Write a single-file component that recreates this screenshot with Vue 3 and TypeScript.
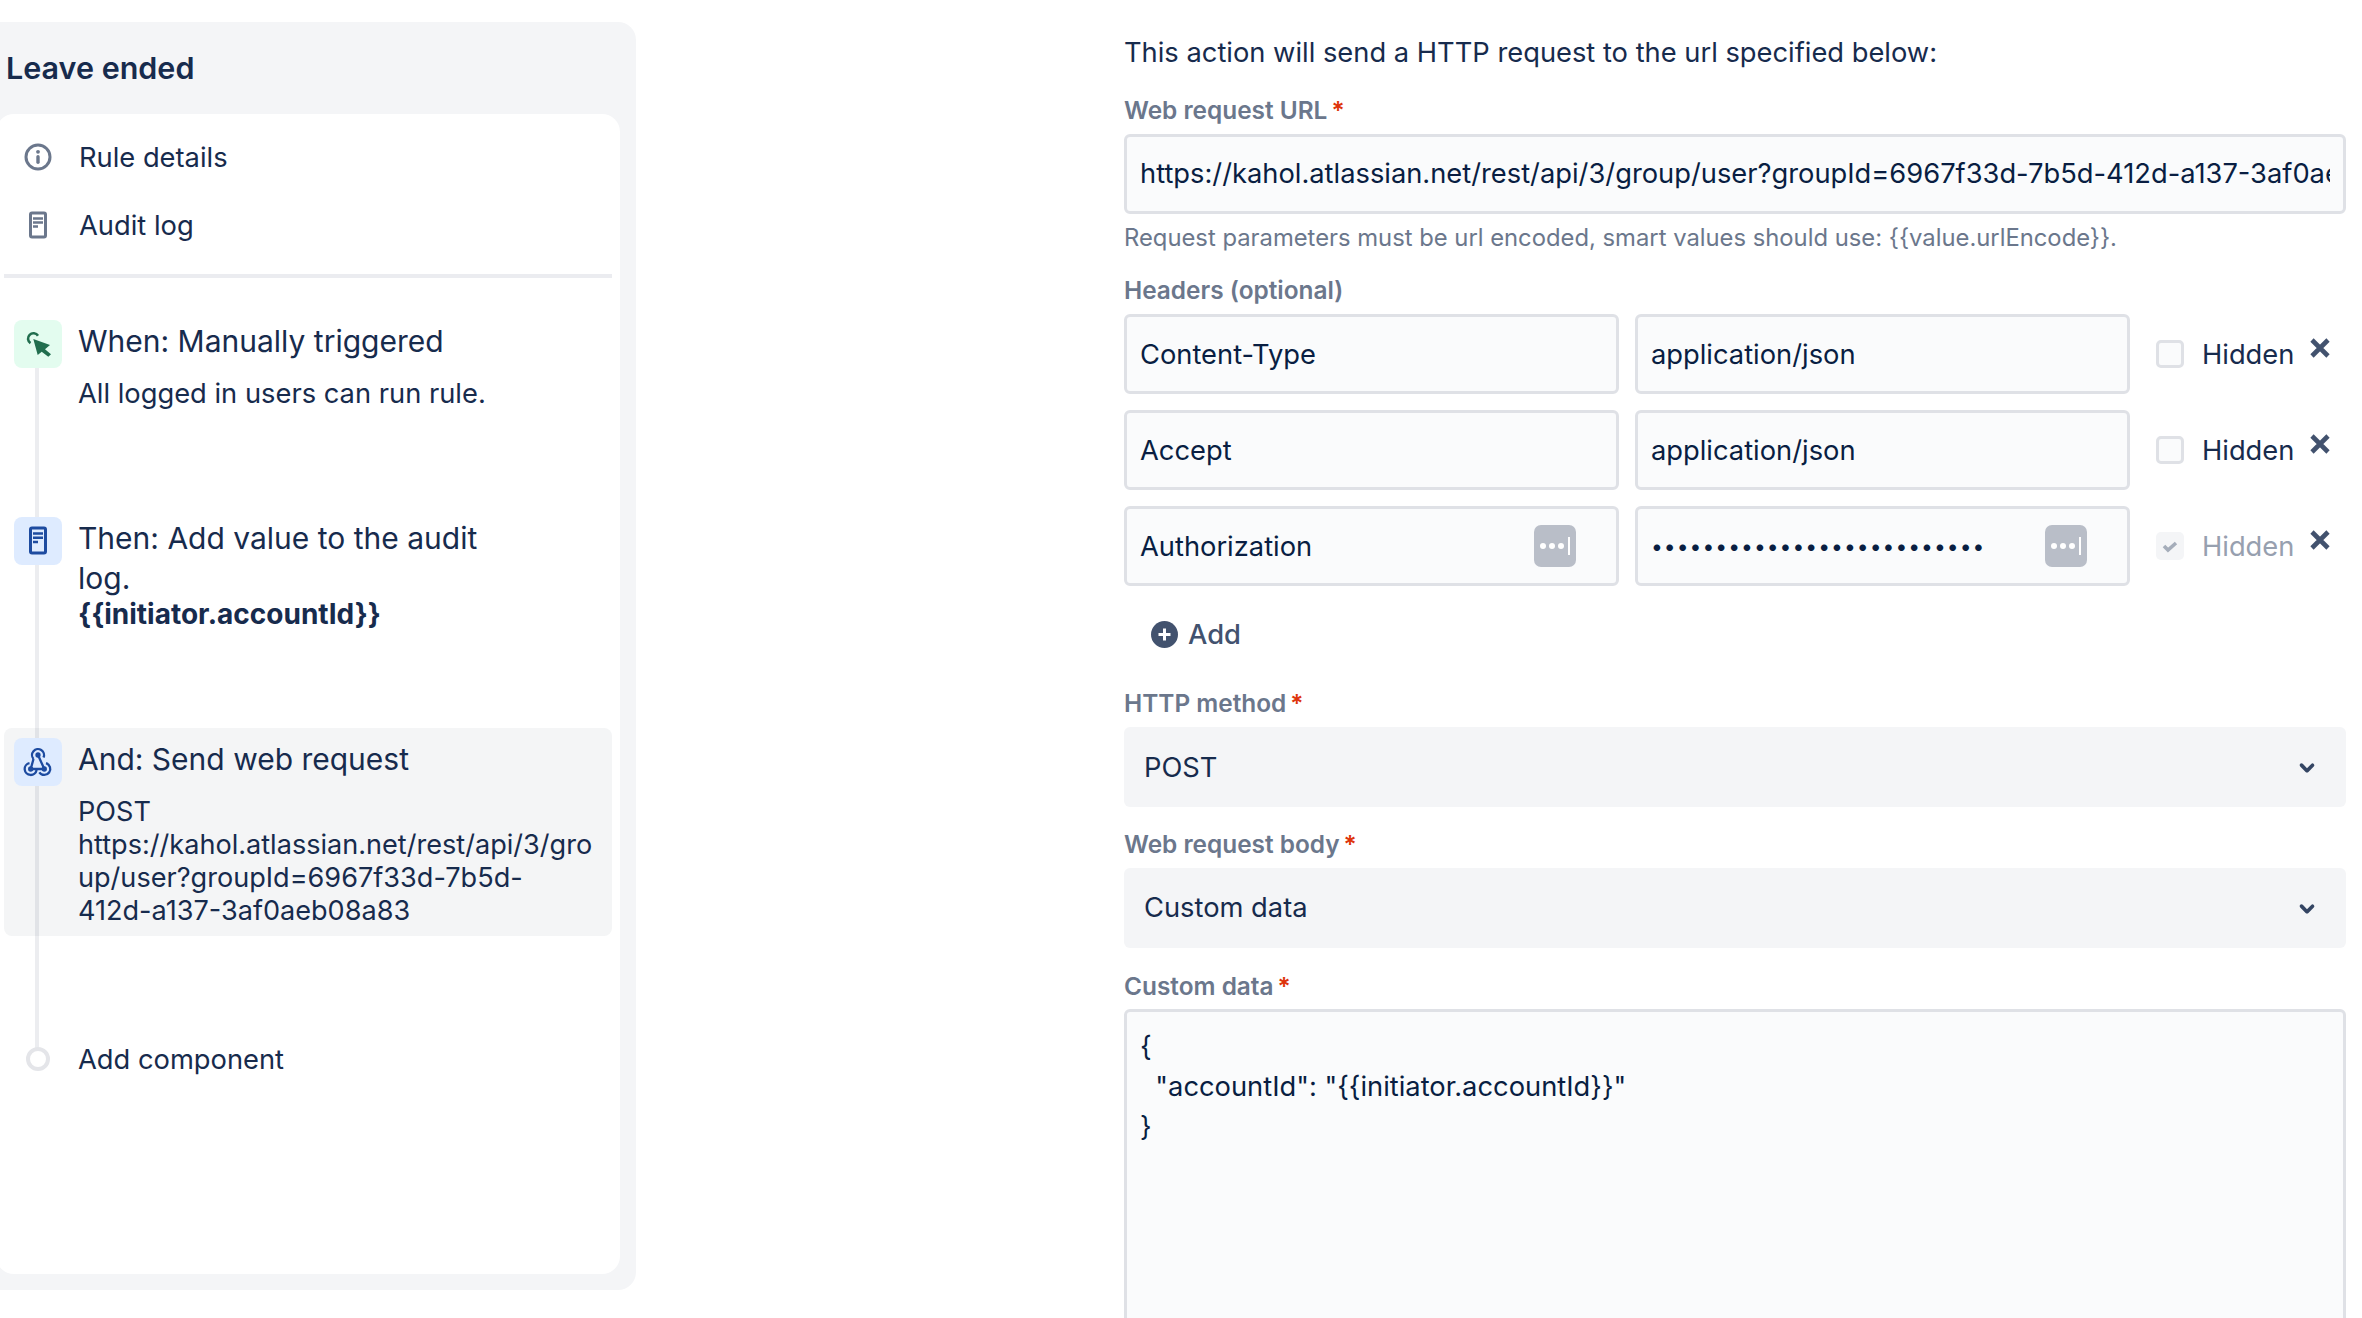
<script setup lang="ts">
const headers = [
  { key: 'Content-Type', value: 'application/json' },
  { key: 'Accept', value: 'application/json' },
]
const dots = '•'.repeat(26)
</script>

<template>
  <div class="page">
    <aside class="sidebar">
      <h1 class="title">Leave ended</h1>
      <div class="panel">
        <div class="nav-item">
          <span class="nav-icon">
            <svg width="36" height="36" viewBox="0 0 36 36"><circle cx="18" cy="18" r="12" fill="none" stroke="#6b778c" stroke-width="3"/><circle cx="18" cy="12.8" r="1.9" fill="#6b778c"/><rect x="16.3" y="16" width="3.4" height="9" rx="1.7" fill="#6b778c"/></svg>
          </span>
          Rule details
        </div>
        <div class="nav-item">
          <span class="nav-icon">
            <svg width="36" height="36" viewBox="0 0 36 36"><rect x="10.5" y="6" width="15" height="24" rx="1.5" fill="none" stroke="#6b778c" stroke-width="3"/><path d="M13 11.5h10M13 15.5h10M13 19.5h5" stroke="#6b778c" stroke-width="2.4"/></svg>
          </span>
          Audit log
        </div>
        <div class="divider"></div>

        <div class="steps">
          <div class="line"></div>
          <div class="step step-trigger">
            <span class="box box-green">
              <svg width="28" height="28" viewBox="0 0 28 28"><path d="M6.5 13.2A5.4 5.4 0 1 1 14 5.8" fill="none" stroke="#216e4e" stroke-width="2.6"/><path d="M9.3 9 26 15l-5 4.3 6 5-2.7 2.4-6.6-5-4 3.3z" fill="#216e4e"/></svg>
            </span>
            <div class="step-body">
              <div class="step-title">When: Manually triggered</div>
              <div class="step-text sub">All logged in users can run rule.</div>
            </div>
          </div>

          <div class="step step-then">
            <span class="box box-blue">
              <svg width="28" height="32" viewBox="0 0 28 32"><rect x="6.5" y="3" width="15" height="25" rx="1.5" fill="none" stroke="#1d4ba0" stroke-width="3"/><path d="M9 8.500h10M9 12.800h10M9 17h5" stroke="#1d4ba0" stroke-width="2.400"/></svg>
            </span>
            <div class="step-body">
              <div class="step-title narrow">Then: Add value to the audit log.</div>
              <div class="step-text bold">&#123;&#123;initiator.accountId&#125;&#125;</div>
            </div>
          </div>

          <div class="step step-and">
            <span class="box box-blue">
              <svg width="30" height="30" viewBox="0 0 30 30" fill="none" stroke="#1d4ba0" stroke-width="2.300"><path d="M10.500 12A6 6 0 1 1 20.500 10.500"/><path d="M15 8l6.300 14M10.500 12 7.700 22M7.700 22h13.600"/><path d="M6.500 16.100A6 6 0 1 0 13.600 23"/><path d="M23 16.200A6 6 0 1 1 16.300 25.300"/><circle cx="15" cy="8" r="1.500" fill="#1d4ba0"/><circle cx="7.700" cy="22" r="1.500" fill="#1d4ba0"/><circle cx="21.300" cy="22" r="1.500" fill="#1d4ba0"/></svg>
            </span>
            <div class="step-body">
              <div class="step-title">And: Send web request</div>
              <div class="step-text sub url-lines">POST<br />https://kahol.atlassian.net/rest/api/3/gro<br />up/user?groupId=6967f33d-7b5d-<br />412d-a137-3af0aeb08a83</div>
            </div>
          </div>

          <div class="step step-add">
            <span class="add-slot"><span class="ring"></span></span>
            <div class="add-text">Add component</div>
          </div>
        </div>
      </div>
    </aside>

    <main class="form">
      <p class="intro">This action will send a HTTP request to the url specified below:</p>

      <label class="label first">Web request URL<span class="req">*</span></label>
      <div class="input url"><span class="clip">https://kahol.atlassian.net/rest/api/3/group/user?groupId=6967f33d-7b5d-412d-a137-3af0aeb08a83</span></div>
      <p class="help">Request parameters must be url encoded, smart values should use: &#123;&#123;value.urlEncode&#125;&#125;.</p>

      <label class="label headers-label">Headers (optional)</label>
      <div class="rows">
        <div v-for="h in headers" :key="h.key" class="row">
          <div class="input key">{{ h.key }}</div>
          <div class="input val">{{ h.value }}</div>
          <span class="check"></span>
          <span class="hidden-label">Hidden</span>
          <svg class="close" width="22" height="22" viewBox="0 0 22 22"><path d="M3 3l16 16M19 3L3 19" stroke="#42526e" stroke-width="4.600"/></svg>
        </div>
        <div class="row">
          <div class="input key spaced">
            Authorization
            <span class="secret"><svg width="42" height="42" viewBox="0 0 42 42"><circle cx="9" cy="21" r="3" fill="#fff"/><circle cx="18" cy="21" r="3" fill="#fff"/><circle cx="27" cy="21" r="3" fill="#fff"/><rect x="34" y="12" width="2" height="18" fill="#fff"/></svg></span>
          </div>
          <div class="input val spaced">
            <span class="dots">{{ dots }}</span>
            <span class="secret"><svg width="42" height="42" viewBox="0 0 42 42"><circle cx="9" cy="21" r="3" fill="#fff"/><circle cx="18" cy="21" r="3" fill="#fff"/><circle cx="27" cy="21" r="3" fill="#fff"/><rect x="34" y="12" width="2" height="18" fill="#fff"/></svg></span>
          </div>
          <span class="check checked"><svg width="20" height="20" viewBox="0 0 20 20"><path d="M4 10l4 4 8-7" fill="none" stroke="#a5adba" stroke-width="3.600"/></svg></span>
          <span class="hidden-label off">Hidden</span>
          <svg class="close" width="22" height="22" viewBox="0 0 22 22"><path d="M3 3l16 16M19 3L3 19" stroke="#42526e" stroke-width="4.600"/></svg>
        </div>
      </div>

      <div class="add">
        <svg width="27" height="27" viewBox="0 0 27 27"><circle cx="13.500" cy="13.500" r="13.500" fill="#42526e"/><path d="M13.500 7.500v12M7.500 13.500h12" stroke="#fff" stroke-width="3"/></svg>
        Add
      </div>

      <label class="label method-label">HTTP method<span class="req">*</span></label>
      <div class="select">
        POST
        <svg width="44" height="44" viewBox="0 0 24 24"><path fill="#344563" d="M8.292 10.293a1.009 1.009 0 000 1.419l2.939 2.965c.218.215.5.322.779.322s.556-.107.769-.322l2.93-2.955a1.01 1.01 0 000-1.419.987.987 0 00-1.406 0l-2.298 2.317-2.307-2.327a.99.99 0 00-1.406 0z"/></svg>
      </div>

      <label class="label body-label">Web request body<span class="req">*</span></label>
      <div class="select">
        Custom data
        <svg width="44" height="44" viewBox="0 0 24 24"><path fill="#344563" d="M8.292 10.293a1.009 1.009 0 000 1.419l2.939 2.965c.218.215.5.322.779.322s.556-.107.769-.322l2.93-2.955a1.01 1.01 0 000-1.419.987.987 0 00-1.406 0l-2.298 2.317-2.307-2.327a.99.99 0 00-1.406 0z"/></svg>
      </div>

      <label class="label data-label">Custom data<span class="req">*</span></label>
      <pre class="textarea">{
  "accountId": "&#123;&#123;initiator.accountId&#125;&#125;"
}</pre>
    </main>
  </div>
</template>

<style>
html, body { margin: 0; overflow: hidden; background: #fff; }
</style>

<style scoped>
.page {
  display: flex;
  align-items: flex-start;
  height: 1318px;
  overflow: hidden;
  font-family: Inter, "Liberation Sans", sans-serif;
  font-size: 27.3px;
  color: #172b4d;
  background: #fff;
}
.sidebar {
  flex: none;
  box-sizing: border-box;
  width: 652px;
  height: 1268px;
  margin: 22px 0 0 -16px;
  padding-left: 12px;
  background: #f4f5f7;
  border-radius: 18px;
}
.title {
  height: 92px;
  margin: 0;
  padding-left: 10px;
  font-size: 30.5px;
  font-weight: 600;
  line-height: 92px;
}
.panel {
  box-sizing: border-box;
  width: 624px;
  height: 1160px;
  padding: 9px 8px 0;
  background: #fff;
  border-radius: 18px;
}
.nav-item {
  display: flex;
  align-items: center;
  gap: 23px;
  height: 68px;
  padding-left: 16px;
}
.nav-icon { display: flex; width: 36px; height: 36px; }
.divider { height: 4px; margin-top: 15px; background: #ebecf0; }
.steps { position: relative; margin-top: 42px; }
.line {
  position: absolute;
  z-index: 1;
  top: 48px;
  left: 31px;
  bottom: 24px;
  width: 4px;
  background: rgba(9, 30, 66, 0.08);
}
.step { display: flex; gap: 16px; padding-left: 10px; }
.box {
  position: relative;
  z-index: 2;
  flex: none;
  display: flex;
  align-items: center;
  justify-content: center;
  width: 48px;
  height: 48px;
  border-radius: 8px;
}
.box-green { background: #e3fcef; }
.box-blue { background: #deebff; }
.step-title { font-size: 30px; line-height: 40px; }
.step-text { line-height: 33px; }
.sub { margin-top: 16px; }
.step-trigger .step-body { padding-top: 1px; }
.step-then { margin-top: 107px; }
.step-then .step-body { padding-top: 1px; }
.narrow { width: 440px; }
.bold { font-size: 28px; font-weight: 700; }
.step-and {
  margin-top: 97px;
  padding-top: 10px;
  padding-bottom: 9px;
  background: #f4f5f6;
  border-radius: 8px;
}
.step-and .step-body { padding-top: 1px; }
.url-lines { margin-top: 16px; font-size: 27.1px; white-space: nowrap; }
.step-add { align-items: center; height: 34px; margin-top: 106px; }
.add-slot { display: flex; justify-content: center; width: 48px; position: relative; z-index: 2; }
.ring {
  box-sizing: border-box;
  width: 24px;
  height: 24px;
  border: 4px solid #e4e5e9;
  border-radius: 50%;
  background: #fff;
}

.form { flex: none; width: 1222px; margin-left: 488px; }
.intro { margin: 32.5px 0 0; line-height: 40px; }
.label {
  display: block;
  font-size: 24.4px;
  font-weight: 600;
  line-height: 28px;
  color: #6b778c;
}
.first { margin-top: 23px; }
.req { margin-left: 4px; color: #de350b; }
.input {
  box-sizing: border-box;
  display: flex;
  align-items: center;
  height: 80px;
  padding: 0 13px;
  border: 3.500px solid #dfe1e6;
  border-radius: 6px;
  background: #fafbfc;
  color: #091e42;
}
.url { margin-top: 10px; }
.clip { display: block; overflow: hidden; white-space: nowrap; }
.help { margin: 8.5px 0 0; font-size: 23.8px; line-height: 32px; color: #6b778c; }
.headers-label { margin-top: 22px; }
.rows { display: flex; flex-direction: column; gap: 16px; margin-top: 10px; }
.row { display: flex; align-items: center; }
.key { width: 495px; }
.val { width: 495px; margin-left: 16px; }
.spaced { justify-content: space-between; padding-right: 40px; }
.secret { display: flex; border-radius: 7px; background: #b9bec8; }
.dots { font-size: 21px; letter-spacing: 1.050px; }
.check {
  box-sizing: border-box;
  display: flex;
  align-items: center;
  justify-content: center;
  width: 28px;
  height: 28px;
  margin-left: 26px;
  border: 3px solid #dfe1e6;
  border-radius: 5px;
  background: #fafbfc;
}
.checked { border: 0; background: #f4f5f7; }
.hidden-label { margin-left: 18px; color: #172b4d; }
.off { color: #97a0af; }
.close { margin: -12px 0 0 15px; }
.add {
  display: flex;
  align-items: center;
  gap: 10px;
  height: 40px;
  margin: 28px 0 0 27px;
  font-weight: 500;
  color: #42526e;
}
.method-label { margin-top: 35px; }
.select {
  display: flex;
  align-items: center;
  justify-content: space-between;
  box-sizing: border-box;
  height: 80px;
  margin-top: 10px;
  padding: 0 17px 0 20px;
  border-radius: 6px;
  background: #f4f5f7;
  color: #172b4d;
}
.body-label { margin-top: 22.5px; }
.data-label { margin-top: 24px; }
.textarea {
  box-sizing: border-box;
  height: 400px;
  margin: 9px 0 0;
  padding: 15px 13px;
  border: 3.500px solid #dfe1e6;
  border-radius: 6px;
  background: #fafbfc;
  font: inherit;
  line-height: 40px;
  color: #091e42;
}
</style>
